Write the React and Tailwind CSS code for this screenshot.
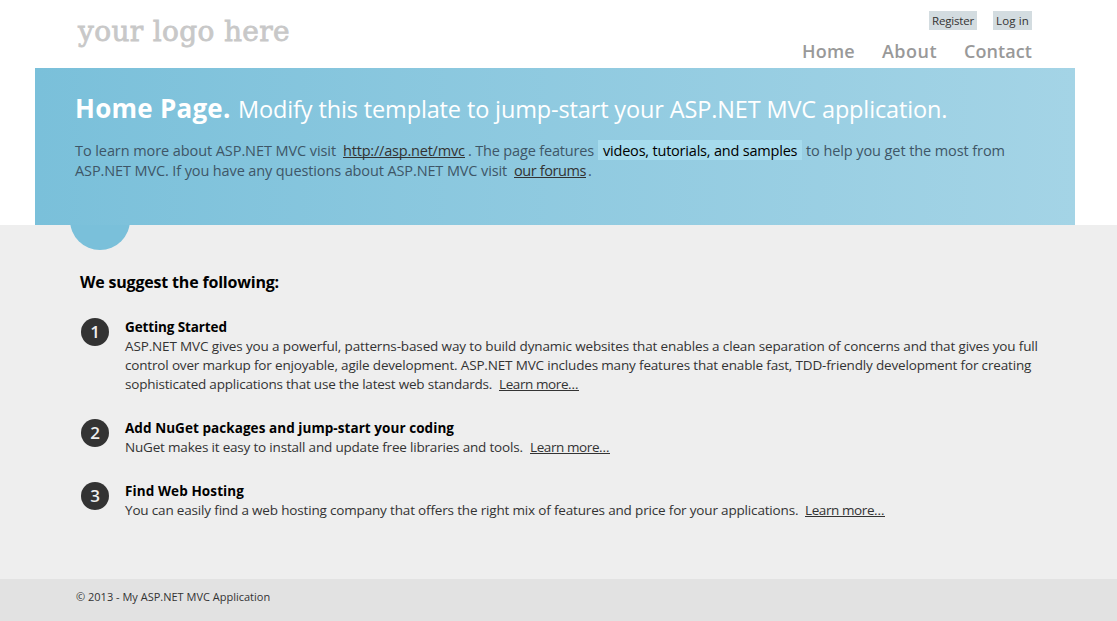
const line = "flex whitespace-nowrap";

function LearnMore() {
  return (
    <a href="#" className="w-[80px] tracking-[-0.41px] text-[#333]">
      <span className="block h-[16px] w-[80px] border-b border-[#333]">Learn more…</span>
    </a>
  );
}

function Step({ number, title, titleClass, children }) {
  return (
    <li className="flex gap-4">
      <span className="flex size-7 shrink-0 items-center justify-center rounded-full bg-[#333] text-[17px] font-semibold leading-7 text-[#eee]">
        {number}
      </span>
      <div className="text-[13.5px] leading-[19px] text-[#333]">
        <h5 className={`whitespace-nowrap font-bold text-black ${titleClass}`}>{title}</h5>
        {children}
      </div>
    </li>
  );
}

export default function App() {
  return (
    <div className="flex h-[621px] w-[1117px] flex-col overflow-hidden bg-[#e2e2e2] font-['Open_Sans',sans-serif] text-[#333]">
      <header className="flex h-[68px] shrink-0 justify-between bg-white pl-[78px] pr-[85px]">
        <a href="#" className="mt-3 whitespace-nowrap font-['DejaVu_Serif',serif] text-[28px] leading-[40px] tracking-[0.35px] text-[#c8c8c8] [-webkit-text-stroke:0.8px_#c8c8c8]">
          your logo here
        </a>
        <div className="flex flex-col items-end pt-[11px]">
          <div className="flex gap-4 whitespace-nowrap text-[11.5px] leading-[19px]">
            <a href="#" className="w-12 bg-[#d3dce0] pl-[3px] tracking-[-0.18px]">Register</a>
            <a href="#" className="w-[39px] bg-[#d3dce0] pl-[3px] tracking-[0.13px]">Log in</a>
          </div>
          <nav className="mt-[9px] flex whitespace-nowrap text-[18px] font-semibold leading-6 text-[#999]">
            <a href="#" className="w-20 tracking-[0.2px]">Home</a>
            <a href="#" className="w-[82px] tracking-[0.47px]">About</a>
            <a href="#" className="w-[68px] tracking-[0.08px]">Contact</a>
          </nav>
        </div>
      </header>

      <section className="shrink-0 bg-white pl-[35px] pr-[42px]">
        <div className="h-[157px] bg-linear-to-r from-[#7ac0da] to-[#a4d4e6] pl-10 pt-[25px] text-[#3e5667]">
          <div className="flex h-[47px] items-baseline whitespace-nowrap leading-[30px] text-white">
            <h1 className="w-[163px] text-[26px] font-bold tracking-[0.25px]">Home Page.</h1>
            <h2 className="text-[23.5px] tracking-[-0.137px]">
              Modify this template to jump-start your ASP.NET MVC application.
            </h2>
          </div>
          <div className="text-[14.5px] leading-[22px]">
            <p className={`${line} h-5`}>
              <span className="w-[268px] tracking-[-0.08px]">To learn more about ASP.NET MVC visit</span>
              <a href="#" className="w-[125px] tracking-[-0.2px] text-[#333]">
                <span className="block h-[18px] w-[122px] border-b border-[#333]">http://asp.net/mvc</span>
              </a>
              <span className="w-[130px] tracking-[-0.17px]">. The page features</span>
              <mark className="mr-1 h-5 w-[204px] bg-[#a6dbed] pl-[5px] tracking-[-0.2px] text-black">
                videos, tutorials, and samples
              </mark>
              <span className="tracking-[-0.09px]">to help you get the most from</span>
            </p>
            <p className={`${line} h-5`}>
              <span className="w-[439px] tracking-[-0.115px]">
                ASP.NET MVC. If you have any questions about ASP.NET MVC visit
              </span>
              <a href="#" className="w-[74px] tracking-[-0.4px] text-[#333]">
                <span className="block h-[18px] w-[72px] border-b border-[#333]">our forums</span>
              </a>
              <span>.</span>
            </p>
          </div>
        </div>
      </section>

      <main className="relative h-[354px] shrink-0 bg-[#eee] pl-[81px] pt-[47px]">
        <div className="absolute left-[70px] top-0 h-[25px] w-[60px] overflow-hidden">
          <div className="-mt-[35px] size-[60px] rounded-full bg-[#7ac0da]" />
        </div>
        <h3 className="-ml-px text-[16px] font-bold leading-5 tracking-[-0.187px] text-black">
          We suggest the following:
        </h3>
        <ol className="mt-[26px] flex flex-col gap-[25px]">
          <Step number="1" title="Getting Started" titleClass="tracking-[-0.11px]">
            <p className={`${line} tracking-[-0.138px]`}>
              ASP.NET MVC gives you a powerful, patterns-based way to build dynamic websites that enables a clean separation of concerns and that gives you full
            </p>
            <p className={`${line} tracking-[-0.168px]`}>
              control over markup for enjoyable, agile development. ASP.NET MVC includes many features that enable fast, TDD-friendly development for creating
            </p>
            <p className={line}>
              <span className="w-[374px] tracking-[-0.21px]">sophisticated applications that use the latest web standards.</span>
              <LearnMore />
            </p>
          </Step>
          <Step number="2" title="Add NuGet packages and jump-start your coding" titleClass="tracking-[0.06px]">
            <p className={line}>
              <span className="w-[405px] tracking-[-0.19px]">NuGet makes it easy to install and update free libraries and tools.</span>
              <LearnMore />
            </p>
          </Step>
          <Step number="3" title="Find Web Hosting" titleClass="tracking-[0.1px]">
            <p className={line}>
              <span className="w-[680px] tracking-[-0.17px]">
                You can easily find a web hosting company that offers the right mix of features and price for your applications.
              </span>
              <LearnMore />
            </p>
          </Step>
        </ol>
      </main>

      <footer className="h-[42px] shrink-0 bg-[#e2e2e2] pl-[76px] pt-[10px] text-[11px] leading-4">
        <p>© 2013 - My ASP.NET MVC Application</p>
      </footer>
    </div>
  );
}
